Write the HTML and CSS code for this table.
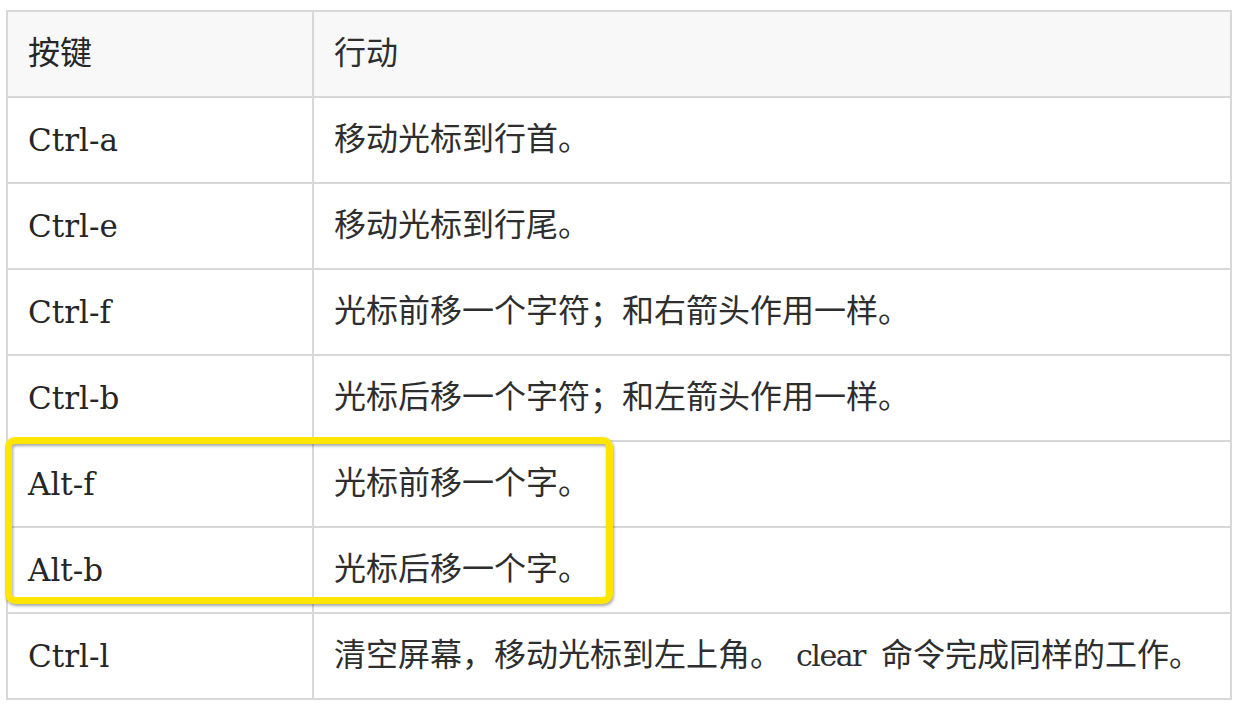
FILE: index.html
```html
<!DOCTYPE html>
<html lang="zh-CN">
<head>
    <meta charset="UTF-8">
    <title>命令行快捷键</title>
    <link rel="stylesheet" href="styles.css">
</head>
<body>

    <div class="keys">
        <table class="keys-table">
            <thead>
                <tr>
                    <th class="col-key">按键</th>
                    <th class="col-action">行动</th>
                </tr>
            </thead>
            <tbody>
                <tr><td class="col-key">Ctrl-a</td><td class="col-action">移动光标到行首。</td></tr>
                <tr><td class="col-key">Ctrl-e</td><td class="col-action">移动光标到行尾。</td></tr>
                <tr><td class="col-key">Ctrl-f</td><td class="col-action">光标前移一个字符；和右箭头作用一样。</td></tr>
                <tr><td class="col-key">Ctrl-b</td><td class="col-action">光标后移一个字符；和左箭头作用一样。</td></tr>
                <tr><td class="col-key">Alt-f</td><td class="col-action">光标前移一个字。</td></tr>
                <tr><td class="col-key">Alt-b</td><td class="col-action">光标后移一个字。</td></tr>
                <tr><td class="col-key">Ctrl-l</td><td class="col-action">清空屏幕，移动光标到左上角。<span class="cmd">clear</span> 命令完成同样的工作。</td></tr>
            </tbody>
        </table>

        <!-- Highlight over the Alt rows -->
        <div class="highlight"></div>
    </div>

</body>
</html>
```

FILE: styles.css
```css
* {
    box-sizing: border-box;
}

html, body {
    margin: 0;
    background: #fff;
}

body {
    padding: 10px 0 0 6px;
    color: #2e2e2e;
    font-family: "DejaVu Serif", "Noto Sans CJK SC", serif;
}

/*--------------------
Table
--------------------*/
.keys {
    position: relative;
    width: 1226px;
}

.keys-table {
    width: 100%;
    border-collapse: collapse;
    table-layout: fixed;
}

.keys-table th,
.keys-table td {
    height: 86px;
    padding: 0 0 0 20px;
    border: 2px solid #d8d8d8;
    text-align: left;
    vertical-align: middle;
    font-weight: normal;
    white-space: nowrap;
}

.keys-table thead tr {
    background: #f8f8f8;
}

.col-key {
    width: 306px;
    font-size: 31px;
    color: #262626;
}

/* CJK glyphs sit a little low in their line box */
.keys-table .col-action,
.keys-table th.col-key {
    padding-bottom: 9px;
    font-family: "Noto Sans CJK SC", sans-serif;
    font-size: 32px;
}

.cmd {
    font-family: "DejaVu Serif", serif;
    font-size: 30px;
    letter-spacing: -1.5px;
    margin-left: 14px;
    margin-right: 9px;
}

/*--------------------
Highlight
--------------------*/
.highlight {
    position: absolute;
    top: 427px;
    left: -1px;
    width: 608px;
    height: 167px;
    border: 7px solid #ffe500;
    border-radius: 10px;
    filter: drop-shadow(1px 2px 1.5px rgba(0, 0, 0, 0.35));
}
```
